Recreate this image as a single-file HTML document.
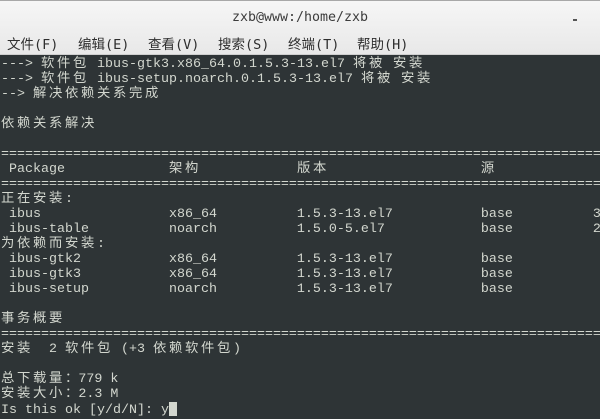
<!DOCTYPE html>
<html><head><meta charset="utf-8"><style>
html,body{margin:0;padding:0;width:600px;height:419px;overflow:hidden;background:#2e3436}
#top{position:absolute;left:0;top:0;width:600px;height:55px;background:linear-gradient(#f6f6f6,#e8e8e8);border-top:1px solid #a8a8a8;box-sizing:border-box;border-bottom:1px solid #cfcfcf}
#title{position:absolute;top:9px;width:600px;text-align:center;font:13.3px "DejaVu Sans Mono","Noto Sans CJK SC",monospace;color:#3c3c3c}
#min{position:absolute;left:573px;top:18px;width:4px;height:2px;background:#555}
.m{position:absolute;top:32px;font:13.5px "DejaVu Sans Mono","Noto Sans CJK SC",monospace;color:#2e2e2e;white-space:pre}
#term{position:absolute;left:1px;top:57px;margin:0;font:13.33px/15px "Liberation Mono","Noto Sans CJK SC",monospace;color:#d3d7cf;white-space:pre}
.c{letter-spacing:2.67px}
#cur{display:inline-block;width:8px;height:14px;background:#d3d7cf;vertical-align:-3px}
</style></head><body>
<div id="top"><div id="title">zxb@www:/home/zxb</div><div id="min"></div>
<div class="m" style="left:7px">文件(F)</div><div class="m" style="left:78px">编辑(E)</div><div class="m" style="left:148px">查看(V)</div><div class="m" style="left:218px">搜索(S)</div><div class="m" style="left:288px">终端(T)</div><div class="m" style="left:357px">帮助(H)</div></div>
<pre id="term">---> <span class="c">软件包</span> ibus-gtk3.x86_64.0.1.5.3-13.el7 <span class="c">将被</span> <span class="c">安装</span>
---> <span class="c">软件包</span> ibus-setup.noarch.0.1.5.3-13.el7 <span class="c">将被</span> <span class="c">安装</span>
--> <span class="c">解决依赖关系完成</span>

<span class="c">依赖关系解决</span>

===========================================================================
 Package             <span class="c">架构</span>            <span class="c">版本</span>                   <span class="c">源</span>
===========================================================================
<span class="c">正在安装</span>:
 ibus                x86_64          1.5.3-13.el7           base          3
 ibus-table          noarch          1.5.0-5.el7            base          2
<span class="c">为依赖而安装</span>:
 ibus-gtk2           x86_64          1.5.3-13.el7           base
 ibus-gtk3           x86_64          1.5.3-13.el7           base
 ibus-setup          noarch          1.5.3-13.el7           base

<span class="c">事务概要</span>
===========================================================================
<span class="c">安装</span>  2 <span class="c">软件包</span> (+3 <span class="c">依赖软件包</span>)

<span class="c">总下载量</span>：779 k
<span class="c">安装大小</span>：2.3 M
Is this ok [y/d/N]: y<span id="cur"></span></pre>
</body></html>
